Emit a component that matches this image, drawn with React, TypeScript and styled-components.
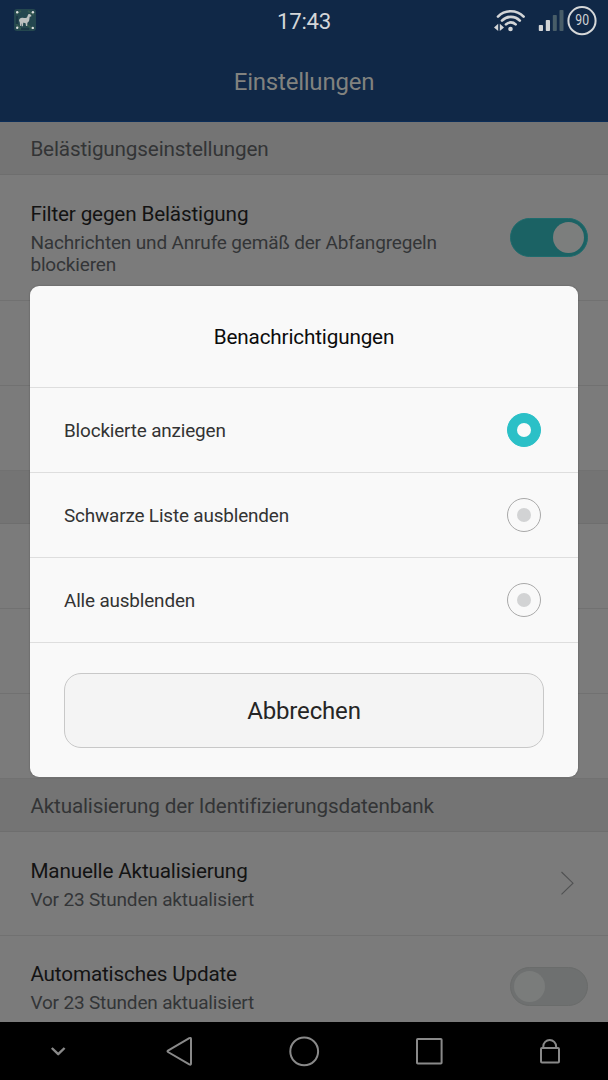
import React from 'react';
import styled, { createGlobalStyle } from 'styled-components';

const GlobalStyle = createGlobalStyle`
  *, *::before, *::after { box-sizing: border-box; }
  body { margin: 0; background: #000; font-family: Roboto, "Noto Sans", sans-serif; letter-spacing: -0.16px; }
  svg { display: block; }
`;

const Screen = styled.div`
  position: relative;
  display: flex;
  flex-direction: column;
  width: 608px;
  height: 1080px;
  overflow: hidden;
  background: #7b7b7b;
`;

const Header = styled.header`
  flex: none;
  height: 122px;
  background: #102847;
  border-bottom: 1px solid #0b2d58;
`;

const StatusBar = styled.div`
  display: grid;
  grid-template-columns: 1fr auto 1fr;
  align-items: center;
  height: 42px;
  padding: 0 10px 0 14px;
`;

const Clock = styled.div`
  padding-right: 4px;
  font-size: 22.2px;
  letter-spacing: -0.25px;
  line-height: 42px;
  color: #d4d6d8;
`;

const StatusIcons = styled.div`
  display: flex;
  justify-content: flex-end;
`;

const PageTitle = styled.h1`
  margin: 0;
  font-size: 24px;
  letter-spacing: -0.22px;
  line-height: 80px;
  font-weight: 400;
  text-align: center;
  color: #81827f;
`;

const SettingsList = styled.main`
  flex: 1;
  min-height: 0;
  overflow: hidden;
`;

const SectionHeading = styled.h2`
  height: 53px;
  margin: 0;
  padding-left: 30.4px;
  border-bottom: 1px solid #6e6e6e;
  background: #747474;
  color: #333436;
  font-size: 20.7px;
  font-weight: 400;
  line-height: 54px;
`;

const Row = styled.div<{ $height: number; $top?: number }>`
  display: flex;
  align-items: flex-start;
  justify-content: space-between;
  height: ${(p) => p.$height}px;
  padding: ${(p) => p.$top ?? 25}px 20px 0 30.4px;
  border-bottom: 1px solid #717171;
`;

const RowText = styled.div`
  width: 430px;
`;

const RowTitle = styled.div`
  color: #131313;
  font-size: 20.7px;
  line-height: 28px;
`;

const RowNote = styled.div`
  padding-top: 4px;
  color: #333537;
  font-size: 19px;
  line-height: 22px;
`;

const Toggle = styled.div<{ $on?: boolean }>`
  display: flex;
  justify-content: ${(p) => (p.$on ? 'flex-end' : 'flex-start')};
  width: 78px;
  height: 39px;
  margin-top: ${(p) => (p.$on ? 18 : 7)}px;
  padding: 3px;
  border: 1px solid ${(p) => (p.$on ? '#1e6b6d' : '#6a6c6b')};
  border-radius: 20px;
  background: ${(p) => (p.$on ? '#1b6264' : '#6e7070')};
`;

const Knob = styled.span<{ $on?: boolean }>`
  width: 31px;
  height: 31px;
  border-radius: 50%;
  background: ${(p) => (p.$on ? '#7c7e7d' : '#7a7c7b')};
`;

const ChevronBox = styled.div`
  padding: 14px 14px 0 0;
`;

const NavBar = styled.nav`
  flex: none;
  height: 58px;
  background: #000;
`;

const Dialog = styled.section`
  position: absolute;
  left: 30px;
  top: 286px;
  display: flex;
  flex-direction: column;
  width: 548px;
  height: 491px;
  border-radius: 9px;
  background: #f9f9f9;
  box-shadow: 0 0 2px rgba(0, 0, 0, 0.3);
`;

const DialogTitle = styled.h2`
  height: 102px;
  margin: 0;
  border-bottom: 1px solid #dedede;
  color: #0c0c0c;
  font-size: 20.7px;
  font-weight: 400;
  line-height: 102px;
  text-align: center;
`;

const Option = styled.div`
  display: flex;
  align-items: center;
  justify-content: space-between;
  height: 85px;
  padding: 0 37.5px 0 34px;
  border-bottom: 1px solid #dedede;
  color: #333;
  font-size: 18.9px;
`;

const Radio = styled.span<{ $on?: boolean }>`
  display: flex;
  align-items: center;
  justify-content: center;
  width: 34px;
  height: 34px;
  border: 1px solid ${(p) => (p.$on ? '#2bc0c7' : '#a9a9a9')};
  border-radius: 50%;
  background: ${(p) => (p.$on ? '#2bc0c7' : 'transparent')};

  &::after {
    content: '';
    width: 14px;
    height: 14px;
    border-radius: 50%;
    background: ${(p) => (p.$on ? '#fafafa' : '#d2d3d4')};
  }
`;

const CancelButton = styled.button`
  height: 75px;
  margin: 30px 34px 0;
  border: 1px solid #c8c8c8;
  border-radius: 17px;
  background: #f4f4f4;
  color: #252525;
  font-family: inherit;
  font-size: 24px;
  letter-spacing: -0.16px;
`;

const AppIconSvg = styled.svg`
  margin-bottom: 2px;
`;

const AppIcon = () => (
  <AppIconSvg width="22" height="22" viewBox="0 0 22 22">
    <rect width="22" height="22" rx="3" fill="#24474f" />
    <path d="M2 5l5-3M14 2l6 4M2 15l5 5M13 16l6 4" stroke="#34584f" strokeWidth="2" />
    <path d="M3 7v8M7 20h8" stroke="#183443" strokeWidth="1.5" />
    <path
      d="M5 11.5C5.2 9.4 6.8 8.6 8.6 8.8Q11 9.2 13 8.4L14.2 5.2L16 5L17.4 6.6L17.2 7.6L15.7 7.8L15.2 11.6Q14.8 13.2 13.4 13.8L13.2 17H12L11.6 14.2Q10.6 13.6 9.2 13.8L9 17.2H7.6L7.4 13.9L6.8 17H6L5.8 13.6Z"
      fill="#bcc0bf"
    />
    <g fill="#dcdedd">
      <circle cx="3.2" cy="3.2" r="1.2" />
      <circle cx="18.9" cy="3.2" r="1.2" />
      <circle cx="3.2" cy="18.7" r="1.2" />
      <circle cx="18.8" cy="18.9" r="1.2" />
    </g>
  </AppIconSvg>
);

const StatusGlyphs = () => (
  <svg width="106" height="42" viewBox="492 0 106 42" fill="none">
    <g stroke="#d3d5d7" strokeWidth="2.7" strokeLinecap="round">
      <path d="M498 16.6A18 18 0 0 1 523.6 16.6" />
      <path d="M502 20.6A12.4 12.4 0 0 1 519.8 20.6" />
      <path d="M506 24.4A6.9 6.9 0 0 1 515.6 24.4" />
    </g>
    <circle cx="510.5" cy="29" r="2.3" fill="#d3d5d7" />
    <path d="M494 27.4l4.2-3.6v7.2zM504 27.4l-4.2-3.6v7.2z" fill="#d3d5d7" />
    <rect x="538.8" y="25" width="4.2" height="6" rx="0.8" fill="#d3d5d7" />
    <rect x="545.8" y="20" width="4.2" height="11" rx="0.8" fill="#d3d5d7" />
    <rect x="552.8" y="15" width="4" height="16" rx="0.8" fill="#485d68" />
    <rect x="559.5" y="10" width="4" height="21" rx="0.8" fill="#485d68" />
    <circle cx="582" cy="20.7" r="13.6" stroke="#d6d8d9" strokeWidth="2" />
    <text
      x="575.3"
      y="25.4"
      fill="#d0d3d5"
      fontSize="14"
      fontFamily="Roboto, sans-serif"
      letterSpacing="0"
      textLength="13.8"
      lengthAdjust="spacingAndGlyphs"
    >
      90
    </text>
  </svg>
);

const Chevron = () => (
  <svg width="14" height="24" viewBox="0 0 14 24" fill="none">
    <path d="M1.5 1L13 12.2L1.5 23.4" stroke="#505152" strokeWidth="1.1" />
  </svg>
);

const NavGlyphs = () => (
  <svg width="608" height="58" viewBox="0 1022 608 58" fill="none" stroke="#898989" strokeWidth="2" strokeLinejoin="round">
    <path d="M51.8 1048L58.2 1054.2L64.6 1048" strokeWidth="2.4" />
    <path d="M168 1050.6Q167 1051.3 168 1052L189.3 1064.4Q191 1065.2 191 1063.6V1039Q191 1037.4 189.3 1038.2Z" />
    <circle cx="304.2" cy="1051.4" r="13.9" />
    <rect x="417" y="1039" width="24.6" height="24.6" rx="0.8" />
    <rect x="541" y="1048" width="18" height="14.6" rx="1" />
    <path d="M543.3 1048V1046.4A6.4 6.4 0 0 1 556.1 1046.4V1048" />
  </svg>
);

const options = [
  { label: 'Blockierte anziegen', selected: true },
  { label: 'Schwarze Liste ausblenden', selected: false },
  { label: 'Alle ausblenden', selected: false },
];

export default function App() {
  return (
    <Screen>
      <GlobalStyle />
      <Header>
        <StatusBar>
          <AppIcon />
          <Clock>17:43</Clock>
          <StatusIcons>
            <StatusGlyphs />
          </StatusIcons>
        </StatusBar>
        <PageTitle>Einstellungen</PageTitle>
      </Header>
      <SettingsList>
        <SectionHeading>Belästigungseinstellungen</SectionHeading>
        <Row $height={126}>
          <RowText>
            <RowTitle>Filter gegen Belästigung</RowTitle>
            <RowNote>Nachrichten und Anrufe gemäß der Abfangregeln blockieren</RowNote>
          </RowText>
          <Toggle $on>
            <Knob $on />
          </Toggle>
        </Row>
        <Row $height={85} />
        <Row $height={85} />
        <SectionHeading />
        <Row $height={85} />
        <Row $height={85} />
        <Row $height={85} />
        <SectionHeading>Aktualisierung der Identifizierungsdatenbank</SectionHeading>
        <Row $height={104}>
          <RowText>
            <RowTitle>Manuelle Aktualisierung</RowTitle>
            <RowNote>Vor 23 Stunden aktualisiert</RowNote>
          </RowText>
          <ChevronBox>
            <Chevron />
          </ChevronBox>
        </Row>
        <Row $height={104} $top={24}>
          <RowText>
            <RowTitle>Automatisches Update</RowTitle>
            <RowNote>Vor 23 Stunden aktualisiert</RowNote>
          </RowText>
          <Toggle>
            <Knob />
          </Toggle>
        </Row>
      </SettingsList>
      <NavBar>
        <NavGlyphs />
      </NavBar>
      <Dialog role="dialog">
        <DialogTitle>Benachrichtigungen</DialogTitle>
        {options.map((option) => (
          <Option key={option.label}>
            <span>{option.label}</span>
            <Radio $on={option.selected} />
          </Option>
        ))}
        <CancelButton>Abbrechen</CancelButton>
      </Dialog>
    </Screen>
  );
}
